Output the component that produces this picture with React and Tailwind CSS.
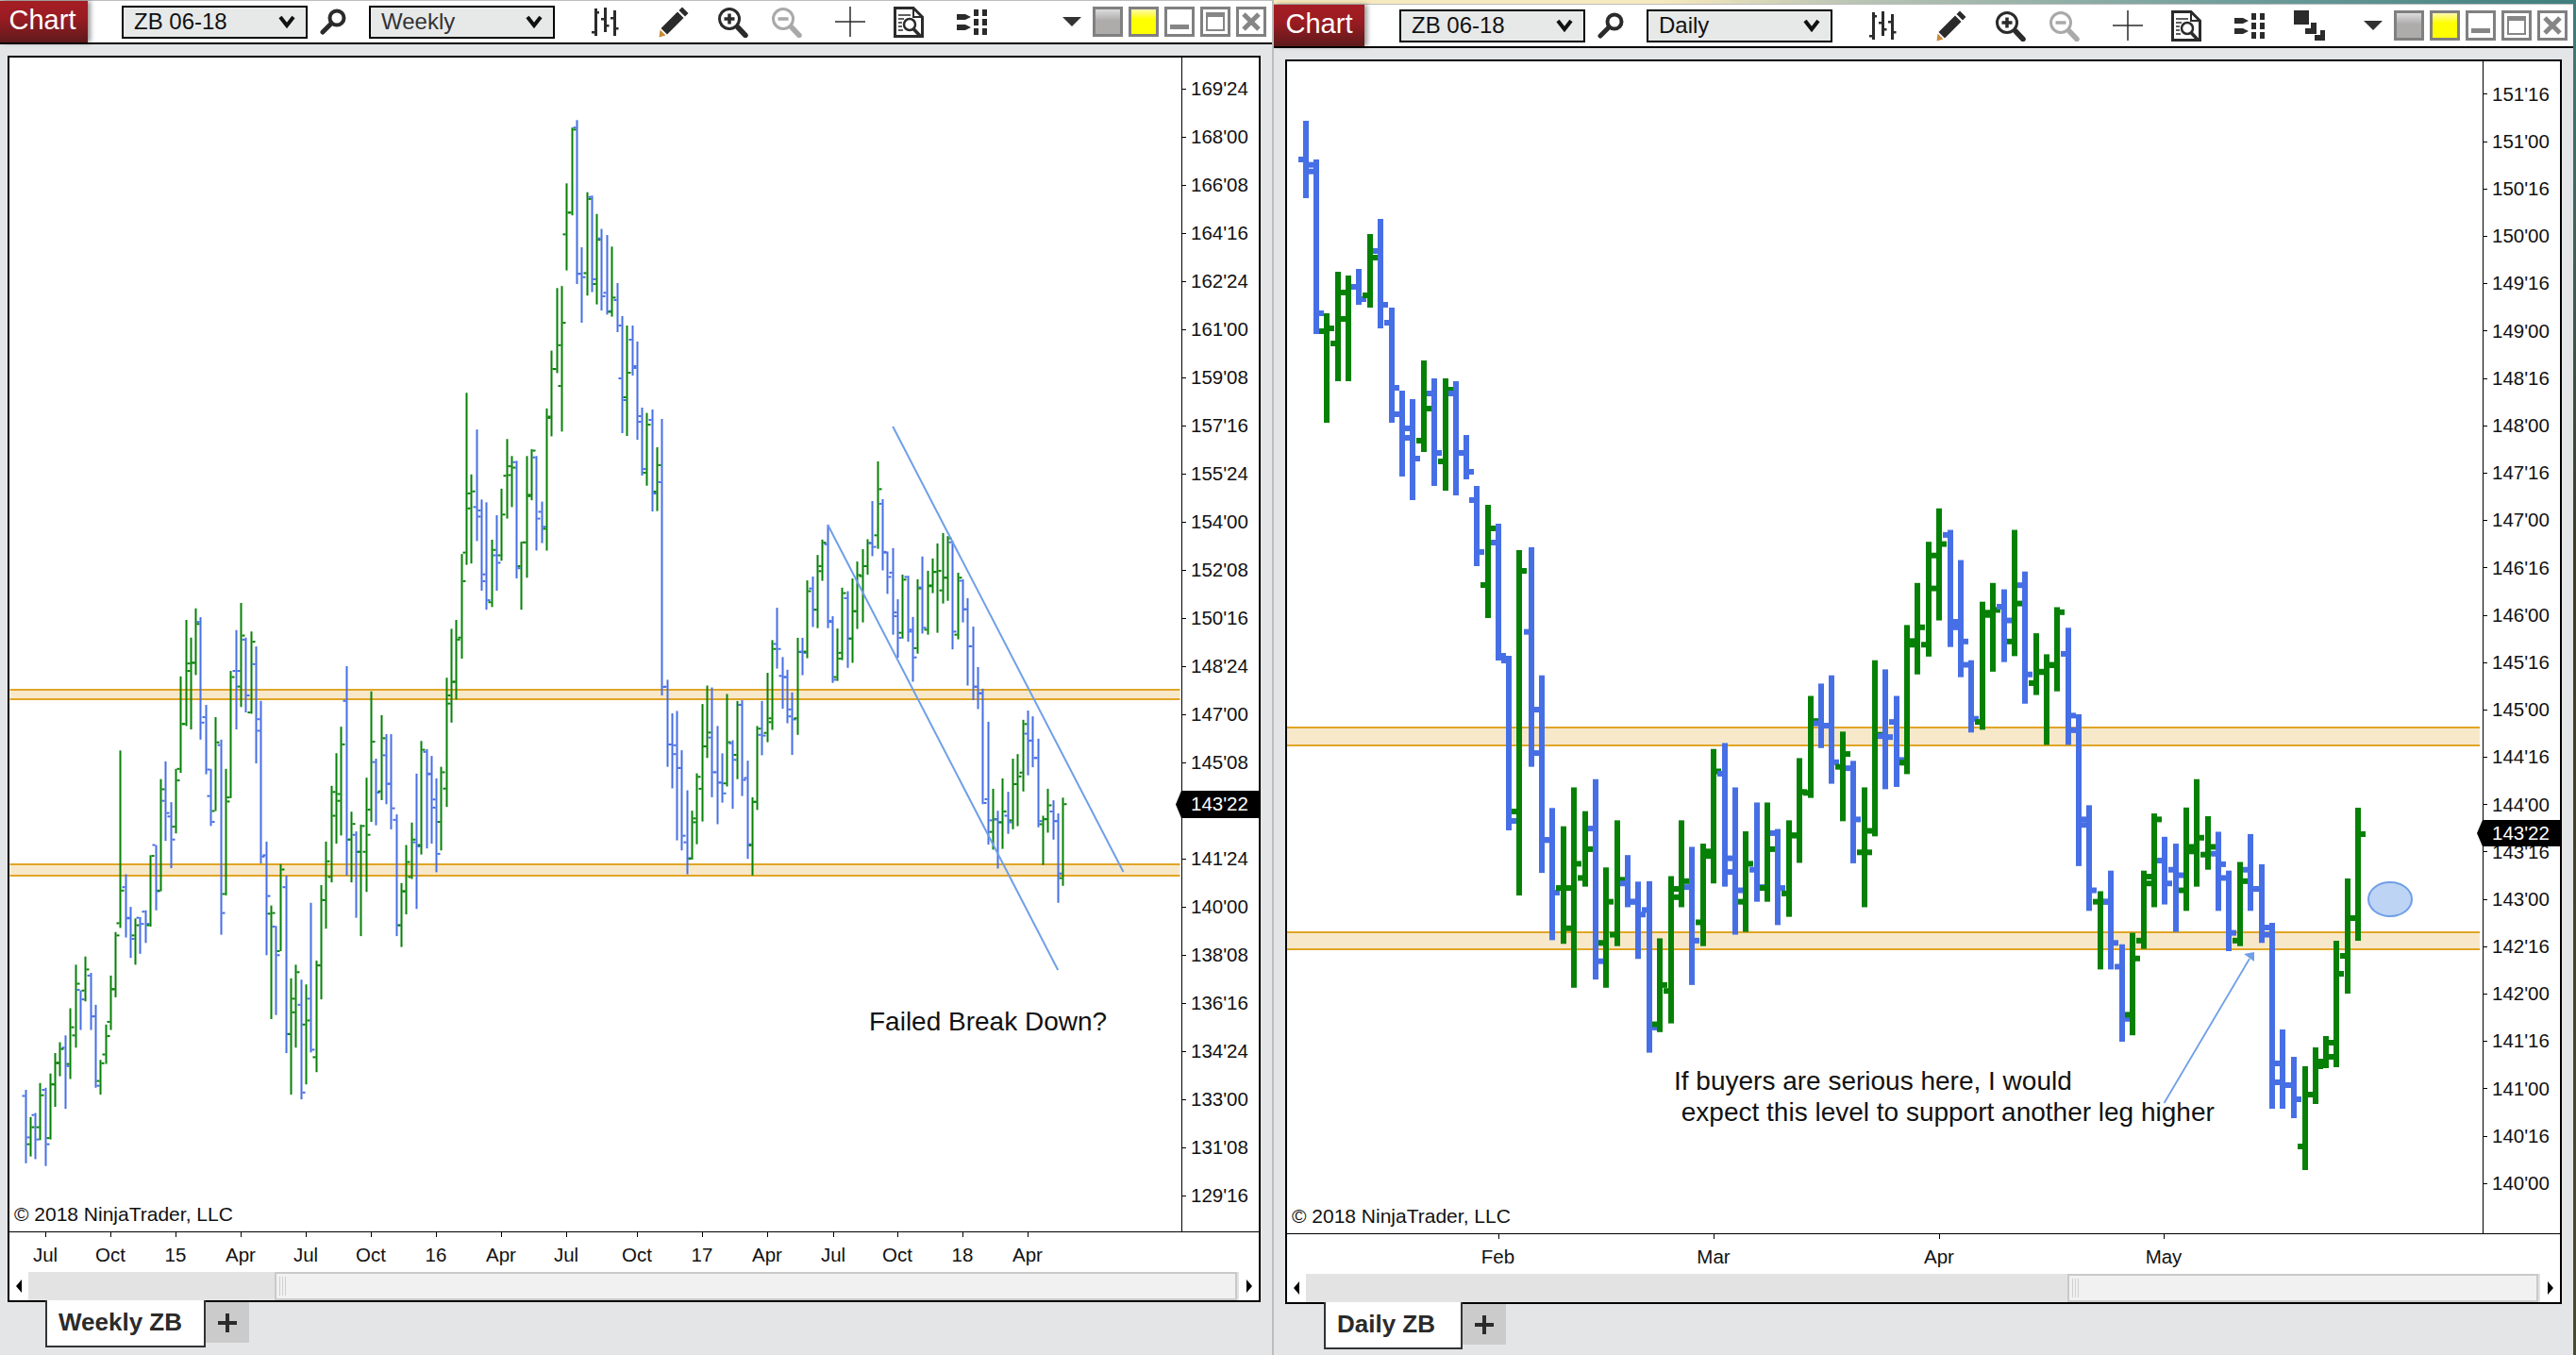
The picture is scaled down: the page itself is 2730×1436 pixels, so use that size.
import React from "react";

// bars are [colour, x, high, low, open, close], traced off crops of the chart
const WEEK_A = [
  ["b",41,1450,1558,1459,1520],["g",53,1490,1548,1530,1505],["b",66,1484,1552,1487,1523],["g",78,1440,1524,1505,1458],
  ["b",93,1447,1562,1450,1530],["g",105,1426,1523,1521,1442],["g",117,1396,1475,1442,1411],["g",131,1380,1430,1410,1390],
  ["b",144,1370,1478,1388,1415],["g",156,1330,1434,1412,1358],["g",171,1266,1388,1370,1294],["b",183,1304,1362,1303,1317],
  ["g",196,1254,1320,1304,1273],["b",210,1278,1362,1282,1342],["b",222,1325,1447,1342,1444],["g",236,1406,1457,1437,1411],
  ["g",249,1354,1412,1398,1371],["g",262,1282,1362,1350,1302],["g",274,1218,1314,1302,1223],["g",286,951,1212,1205,1157],
  ["b",301,1133,1226,1152,1198],["b",313,1181,1256,1197,1228],["g",325,1198,1266,1223,1208],["b",339,1196,1250,1197,1206],
  ["b",352,1186,1234,1188,1206],["g",365,1105,1210,1208,1106],["b",379,1090,1186,1090,1158],["g",391,993,1158,1157,1008],
  ["b",404,967,1084,1025,1043],["b",418,1027,1124,1048,1082],["g",431,978,1073,1063,978],["g",443,842,984,995,912],
  ["g",458,759,915,912,823],["g",470,785,920,834,822],["g",482,742,840,822,765],["b",494,755,935,762,910],
  ["b",509,884,986,902,979],["b",521,978,1062,1018,1056],["g",534,902,1040,1040,939],["b",548,935,1222,943,1190],
  ["g",561,978,1164,1162,1026],["g",573,834,1021,1020,843],["b",587,774,920,834,834],["g",600,734,887,857,782],
  ["b",613,785,895,788,870],["g",627,776,897,895,791],["b",639,798,970,824,922],["b",651,878,1117,905,1107],
  ["b",666,1085,1252,1105,1165],["g",678,1179,1346,1191,1190],["b",690,1209,1340,1210,1252],["g",703,1118,1246,1246,1126],
  ["b",717,1135,1396,1152,1368],["g",730,1286,1457,1368,1316],["g",742,1266,1388,1336,1277],["b",757,1288,1464,1325,1454],
  ["g",769,1295,1442,1354,1348],["b",781,1175,1395,1316,1391],["g",796,1260,1424,1402,1267],["g",808,1149,1317,1267,1171],
  ["g",820,1085,1213,1171,1114],["g",835,1003,1145,1137,1012],["g",847,955,1088,1047,1015],["g",859,916,1076,1025,942],
  ["b",874,827,1135,878,1082],["g",886,1041,1145,1082,1059],["b",899,1070,1197,1075,1100],["g",911,1060,1224,1100,1062],
  ["g",926,991,1159,1100,1075],["g",938,864,1056,1038,938],["b",950,963,1061,968,1013],["g",965,899,1024,1011,933],
  ["b",977,927,1030,958,1000],["b",989,927,1067,1000,1036],["b",1004,1045,1224,1053,1208],["g",1016,1146,1240,1208,1158],
  ["g",1029,1090,1192,1158,1115],["g",1043,1057,1140,1137,1082],["b",1055,985,1184,1086,1092],["g",1068,937,1104,1090,950],
  ["b",1082,949,1095,953,986],["b",1095,959,1088,985,1035],["b",1107,992,1130,1023,1103],["g",1119,975,1098,1056,983],
  ["g",1134,844,1034,1007,870],["g",1146,772,910,882,850],["g",1158,759,876,850,788],["g",1173,662,816,785,702],
  ["g",1185,425,678,660,573],["g",1197,545,676,595,570],["b",1212,479,643,593,607],["b",1224,582,716,598,702],
  ["b",1237,586,744,692,730],["g",1251,641,740,733,656],["b",1263,605,716,664,675],["g",1276,566,672,664,604],
  ["g",1290,493,610,547,533],["g",1303,518,593,546,535],["b",1315,525,698,527,683],["g",1327,644,744,680,645],
  ["g",1342,518,697,645,575],["g",1355,508,583,577,510],["b",1367,518,657,520,610],["b",1381,585,646,600,622],
  ["g",1393,448,657,625,462],["g",1407,363,489,460,390],["g",1420,271,396,390,355],["g",1433,268,482,415,322],
  ["g",1445,117,245,192,160],["g",1460,35,164,160,38],["b",1472,24,265,35,250],["b",1484,211,322,250,255],
  ["g",1499,130,282,249,140],["b",1511,135,277,137,258],["g",1524,162,295,265,200],["b",1536,184,304,198,283],
  ["b",1550,193,310,278,305],["g",1564,210,313,306,285],
];

const WEEK_MID = [
  ["b",654,300,352,318,345],["b",659,335,459,401,424],["g",664,345,462,421,395],["b",669.6,345,398,360,390],
  ["b",675,362,466,388,447],["b",680,432,504,441,497],["g",685,437.6,514.7,501,450],["b",691,434,542,445,523],
  ["g",696,474,541.6,521,493],["b",701,444,737,511,728],
];

const WEEK_B = [
  ["b",201,785,1011,803,953],["b",216,872,1067,953,978],["b",231,866,1202,955,1014],["b",246,968,1228,1014,1190],
  ["b",264,1072,1290,1207,1248],["g",279,1125,1252,1250,1145],["g",294,1028,1212,1155,1037],["g",312,848,1153,1068,958],
  ["g",327,800,988,958,922],["b",342,805,1090,935,1025],["b",360,905,1160,1025,1052],["b",375,976,1104,1052,1080],
  ["g",390,822,1062,1054,947],["b",408,942,1120,950,993],["g",423,840,1043,980,850],["b",438,838,1087,850,1045],
  ["b",456,995,1250,1040,1212],["g",471,1090,1293,1215,1102],["g",486,905,1123,1102,912],["b",501,840,981,928,930],
  ["g",519,767,947,923,885],["g",534,682,915,895,705],["b",549,598,756,692,705],["b",567,726,860,775,778],
  ["b",582,759,898,778,880],["b",597,818,980,862,888],["g",615,676,928,885,713],["b",630,676,773,712,715],
  ["g",645,527,729,712,555],["b",663,517,648,548,603],["g",678,461,651,603,503],["g",693,421,528,490,429],
  ["b",711,383,651,433,635],["b",726,620,793,632,785],["g",741,652,788,778,715],["g",756,546,734,730,560],
  ["b",774,555,754,573,678],["g",789,522,741,678,607],["g",804,478,653,607,513],["g",822,446,636,516,490],
  ["g",837,420,512,490,430],["b",852,321,464,430,440],["g",870,218,445,410,290],["b",885,316,501,328,453],
  ["b",900,452,562,455,518],["b",918,443,668,507,620],["b",933,576,728,610,676],["g",948,512,678,663,525],
  ["b",966,515,686,518,655],["b",981,622,790,660,727],["g",996,524,717,703,548],["b",1011,465,665,545,650],
  ["g",1029,502,668,655,540],["g",1044,470,560,542,505],["g",1059,431,663,505,502],["g",1077,404,587,553,520],
  ["g",1092,412,580,520,418],["b",1107,425,706,428,660],["g",1125,507,680,668,520],["b",1140,524,636,528,602],
  ["b",1155,573,800,602,698],["b",1173,647,838,698,803],["b",1188,752,861,803,820],["b",1203,808,1108,820,1105],
  ["b",1221,894,1213,1095,1150],["g",1236,1068,1226,1180,1147],["b",1251,1125,1275,1148,1155],["g",1266,1041,1224,1155,1127],
  ["b",1284,1076,1185,1138,1155],["g",1299,990,1173,1150,1056],["g",1314,978,1165,1056,1036],["g",1332,889,1075,1026,900],
  ["b",1347,865,1033,925,943],["b",1362,880,1012,943,988],["b",1380,938,1168,988,1152],["g",1395,1138,1266,1160,1147],
  ["g",1410,1068,1182,1147,1111],["b",1428,1098,1200,1127,1152],["b",1443,1132,1364,1152,1288],["g",1458,1091,1320,1300,1108],
];

const DAY_A = [
  ["b",72,84,330,207,224],["b",105,207,762,245,696],["g",138,696,1044,753,744],["g",174,564,912,792,630],
  ["g",207,576,912,714,612],["b",240,555,669,612,651],["g",276,444,678,639,519],["b",309,396,744,498,669],
  ["b",345,678,1044,726,933],
];

const DAY_MID = [
  ["b",1486,414,505,439,454],["b",1497,423,530,464,486],["g",1509,382,479,467,433],["b",1520,401,515,417,480],
  ["g",1532,401,520,489,413],["b",1543,404,525,417,480],["b",1554,461,508,480,500],["b",1565,515,600,530,585],
  ["g",1577,535,655,620,560],["b",1588,555,700,575,695],["b",1599,695,880,700,870],["g",1610,583,949,860,605],
];

const DAY_B = [
  ["b",5,165,645,350,520],["b",27,445,877,615,805],["b",49,735,1024,805,920],["g",72,775,1032,910,910],
  ["g",94,690,1128,998,857],["g",117,742,907,888,825],["b",139,672,1110,780,1070],["g",161,865,1128,1030,940],
  ["g",184,762,1037,1012,892],["b",206,838,952,900,940],["b",228,896,1065,940,968],["b",251,895,1270,958,1215],
  ["g",273,1020,1225,1208,1122],["g",296,884,1206,1135,930],["g",318,762,952,912,895],["b",339,820,1122,908,1025],
  ["g",362,813,1037,985,830],["g",384,606,900,840,655],["b",408,593,907,660,845],["b",429,690,1012,875,915],
  ["g",451,786,1006,940,857],["b",474,723,940,870,908],["g",496,723,940,910,825],["b",518,781,991,790,910],
  ["g",541,762,973,922,795],["g",563,626,855,795,700],["g",586,490,713,702,545],["b",608,463,604,550,555],
  ["b",629,445,682,555,635],["g",653,568,764,645,617],["b",675,632,856,648,760],["g",698,690,952,832,832],
  ["g",719,412,797,785,575],["b",741,432,694,578,580],["b",765,490,689,547,630],["g",786,335,661,636,370],
  ["g",808,243,443,378,340],["g",831,153,404,378,183],["g",853,80,325,255,158],["b",876,127,383,138,328],
  ["b",898,193,449,340,371],["b",919,412,570,422,540],["g",943,284,564,547,308],["g",964,243,437,313,302],
  ["b",988,257,416,295,325],["g",1010,127,403,371,288],["b",1031,218,507,248,443],["g",1054,353,488,462,437],
  ["g",1076,399,597,438,422],["g",1098,296,480,423,307],["b",1121,341,597,398,533],["b",1143,530,862,565,772],
  ["b",1165,729,960,760,915],["g",1188,917,1088,940,940],["b",1209,872,1088,940,1030],["b",1233,1033,1246,1082,1196],
  ["g",1254,1008,1232,1187,1064],["g",1277,872,1043,1025,885],["g",1299,747,952,900,760],["b",1321,798,946,850,900],
  ["b",1344,813,1006,870,882],["g",1366,734,960,915,820],["g",1388,672,907,830,800],["g",1411,753,870,837,820],
  ["b",1433,787,960,835,858],["b",1455,872,1048,888,1008],["g",1478,853,1037,1025,895],["b",1500,792,960,870,912],
  ["b",1522,858,1030,912,1012],
];

const DAY_END = [
  ["b",2408,978,1175,983,1147],["b",2419,1091,1175,1127,1150],["b",2431,1120,1185,1150,1165],["g",2443,1130,1240,1215,1160],
  ["g",2454,1110,1170,1160,1130],["g",2465,1098,1132,1125,1105],["g",2476,997,1131,1120,1032],["g",2488,931,1053,1013,973],
  ["g",2499,856,997,973,884],
];

const trace = (rows, ox, oy, sx, sy) =>
  rows.map(([k, x, h, l, o, c]) => [k, ox + x / sx, oy + h / sy, oy + l / sy, oy + o / sy, oy + c / sy]);

const WEEK_BARS = [...trace(WEEK_A, 10, 110, 2.45, 1.3876), ...WEEK_MID, ...trace(WEEK_B, 640, 400, 3, 2.45)];
const DAY_BARS = [...trace(DAY_A, 1360, 100, 3, 3), ...DAY_MID, ...trace(DAY_B, 1620, 500, 1.96, 2.063), ...DAY_END];

// the 143'16 row of the weekly axis sits under the last-price marker, so it has no label
const WEEK_PRICES = ["169'24","168'00","166'08","164'16","162'24","161'00","159'08","157'16","155'24","154'00","152'08","150'16","148'24","147'00","145'08","","141'24","140'00","138'08","136'16","134'24","133'00","131'08","129'16"];
const DAY_PRICES = ["151'16","151'00","150'16","150'00","149'16","149'00","148'16","148'00","147'16","147'00","146'16","146'00","145'16","145'00","144'16","144'00","143'16","143'00","142'16","142'00","141'16","141'00","140'16","140'00"];

const WEEK_TIMES = [["Jul",48],["Oct",117],["15",186],["Apr",255],["Jul",324],["Oct",393],["16",462],["Apr",531],["Jul",600],["Oct",675],["17",744],["Apr",813],["Jul",883],["Oct",951],["18",1020],["Apr",1089]];
const DAY_TIMES = [["Feb",1587.5],["Mar",1816],["Apr",2055],["May",2293]];

const INK = "#2b2b2b";

function Bars({ data, stem, tick, thick }) {
  return data.map(([k, x, h, l, o, c], i) => {
    const fill = k === "g" ? "#068106" : "#476fe5";
    const sx = Math.round(x - stem / 2);
    return (
      <g key={i} fill={fill}>
        <rect x={sx} y={h} width={stem} height={l - h} />
        <rect x={sx - tick} y={o - thick / 2} width={tick} height={thick} />
        <rect x={sx + stem} y={c - thick / 2} width={tick} height={thick} />
      </g>
    );
  });
}

function Band({ x, w, top, bottom }) {
  return (
    <g>
      <rect x={x} y={top} width={w} height={bottom - top} fill="#f8e8ca" />
      <rect x={x} y={top} width={w} height="2" fill="#e0a526" />
      <rect x={x} y={bottom - 2} width={w} height="2" fill="#e0a526" />
    </g>
  );
}

const SearchIcon = () => (
  <svg width="28" height="28" viewBox="0 0 28 28" fill="none" stroke={INK}>
    <circle cx="18" cy="10" r="7.5" strokeWidth="4" />
    <path d="M12 16 3 25" strokeWidth="5" strokeLinecap="round" />
  </svg>
);

const Chevron = () => (
  <svg width="18" height="14" viewBox="0 0 18 14" fill="none" stroke="#111" strokeWidth="4">
    <path d="M2 2 9 11 16 2" />
  </svg>
);

const BarsIcon = () => (
  <svg width="30" height="30" viewBox="0 0 30 30" fill={INK}>
    <rect x="4" y="1" width="3" height="29" />
    <rect x="7" y="4" width="2" height="2.5" />
    <rect x="1" y="25" width="3" height="2.5" />
    <rect x="14" y="0" width="3" height="26" />
    <rect x="11" y="11" width="3" height="2.5" />
    <rect x="17" y="18" width="2.5" height="2.5" />
    <rect x="24" y="3" width="3" height="27" />
    <rect x="21" y="10" width="3" height="2.5" />
    <rect x="27" y="21" width="2.5" height="2.5" />
  </svg>
);

const PencilIcon = () => (
  <svg width="33" height="34" viewBox="0 0 33 34">
    <path d="M25 1.5 31.5 8 28 11.500 21.500 5Z" fill={INK} />
    <path d="M20 6.500 26.500 13 9 30.500 2.500 24Z" fill={INK} />
    <path d="M1.500 25.500 7.500 31.500 0.500 33.500Z" fill="#c98a3a" />
  </svg>
);

const ZoomIcon = ({ color, plus }) => (
  <svg width="33" height="33" viewBox="0 0 33 33" fill="none" stroke={color}>
    <circle cx="13" cy="13" r="10.500" strokeWidth="3" />
    <path d="M7.500 13H18.500" strokeWidth="3.500" />
    {plus && <path d="M13 7.500V18.500" strokeWidth="3.500" />}
    <path d="M22 22 30 30.500" strokeWidth="5.500" strokeLinecap="round" />
  </svg>
);

const CrossIcon = () => (
  <svg width="32" height="32" viewBox="0 0 32 32" stroke={INK} strokeWidth="1.500">
    <path d="M0 16H32M16 0V32" />
  </svg>
);

const DocIcon = () => (
  <svg width="33" height="33" viewBox="0 0 33 33" fill="none" stroke={INK}>
    <path d="M1.500 1.500H21L30.500 11V31.500H1.500Z" strokeWidth="3" />
    <path d="M21 1.500V11H30.500" strokeWidth="2" />
    <path d="M5 9H18M5 13H11M5 17H9M5 21H9M5 25H10" strokeWidth="1.600" />
    <circle cx="17" cy="19" r="6" strokeWidth="2.500" fill="#fff" />
    <path d="M21 23.500 29 32" strokeWidth="3.500" />
  </svg>
);

const GridIcon = () => (
  <svg width="33" height="27" viewBox="0 0 33 27" fill={INK}>
    <path d="M0 5H9L15 8 9 11H0ZM0 16H9L15 19 9 22H0Z" />
    <rect x="18" y="0" width="5" height="7" /><rect x="27" y="0" width="5" height="7" />
    <rect x="18" y="10" width="5" height="7" /><rect x="27" y="10" width="5" height="7" />
    <rect x="18" y="20" width="5" height="7" /><rect x="27" y="20" width="5" height="7" />
  </svg>
);

const StackIcon = () => (
  <svg width="33" height="33" viewBox="0 0 33 33" fill={INK}>
    <rect x="0" y="0" width="16" height="15" />
    <path d="M18 13H24V25H12V19H18Z" />
    <path d="M28 21H33V32H22V26H28Z" />
  </svg>
);

function Select({ label, dark }) {
  return (
    <div className={`w-[197px] h-[35px] border-2 border-black bg-[#e7e9e9] flex items-center justify-between pl-[11px] pr-[11px] text-[24px] ${dark ? "text-[#333]" : "text-[#111]"}`}>
      <span>{label}</span>
      <Chevron />
    </div>
  );
}

function WinButtons() {
  return (
    <div className="flex items-center gap-[6px]">
      <div className="w-[32px] h-[32px] border-[3px] border-[#808080] bg-[linear-gradient(180deg,#dcdcdc,#aeabab_45%)]" />
      <div className="w-[32px] h-[32px] border-[3px] border-[#808080] bg-[linear-gradient(180deg,#fff9b0,#ffff00_40%)]" />
      <div className="w-[32px] h-[32px] border-[3px] border-[#808080] bg-white flex items-end justify-center pb-[5px]">
        <div className="w-[20px] h-[5px] bg-[#868686]" />
      </div>
      <div className="w-[32px] h-[32px] border-[3px] border-[#808080] bg-white flex items-center justify-center">
        <div className="w-[20px] h-[20px] border-2 border-t-[5px] border-[#868686]" />
      </div>
      <div className="w-[32px] h-[32px] border-[3px] border-[#808080] bg-white flex items-center justify-center">
        <svg width="20" height="20" viewBox="0 0 20 20" stroke="#868686" strokeWidth="5"><path d="M2 2 18 18M18 2 2 18" /></svg>
      </div>
    </div>
  );
}

function Toolbar({ interval, dark, chartClass, extra }) {
  return (
    <div className="h-[46px] bg-white border-b-2 border-black flex items-center pr-[6px]">
      <div className={`${chartClass} self-stretch flex items-center justify-center pb-[2px] text-white text-[29px] bg-[linear-gradient(180deg,#a51d24,#9a1c22_40%,#5f1a1c)] shadow-[3px_0_5px_rgba(0,0,0,0.4)]`}>
        Chart
      </div>
      <Select label="ZB 06-18" />
      <div className="ml-[13px]"><SearchIcon /></div>
      <div className="ml-[24px]"><Select label={interval} dark={dark} /></div>
      <div className="ml-[38px]"><BarsIcon /></div>
      <div className="ml-[42px]"><PencilIcon /></div>
      <div className="ml-[29px]"><ZoomIcon color={INK} plus /></div>
      <div className="ml-[24px]"><ZoomIcon color="#a9a9a9" /></div>
      <div className="ml-[35px]"><CrossIcon /></div>
      <div className="ml-[30px]"><DocIcon /></div>
      <div className="ml-[34px]"><GridIcon /></div>
      {extra && <div className="ml-[30px]"><StackIcon /></div>}
      <div className="ml-auto mr-[12px] w-0 h-0 border-x-[10px] border-x-transparent border-t-[10px] border-t-[#333]" />
      <WinButtons />
    </div>
  );
}

function PriceAxis({ prices, rowClass, padClass, markerClass }) {
  return (
    <div className={`relative w-[82px] border-l border-black text-[20.5px] text-[#111] ${padClass}`}>
      {prices.map((p, i) => (
        <div key={i} className={`${rowClass} flex items-center`}>
          <div className="w-[4px] h-px bg-black" />
          {p && <span className="ml-[5px] leading-none">{p}</span>}
        </div>
      ))}
      <div className={`absolute ${markerClass} -left-[7px] w-[89px] bg-black text-white flex items-center pl-[16px] [clip-path:polygon(0_50%,6px_0,100%_0,100%_100%,6px_100%)]`}>
        143'22
      </div>
    </div>
  );
}

function TimeAxis({ times, origin, heightClass }) {
  return (
    <div className={`relative ${heightClass} border-t border-black text-[20.5px] text-[#111] shrink-0`}>
      {times.map(([t, x]) => (
        <React.Fragment key={x}>
          <div className="absolute top-0 w-px h-[5px] bg-black" style={{ left: x - origin }} />
          <span className="absolute top-[12px] leading-[24px] -translate-x-1/2" style={{ left: x - origin }}>{t}</span>
        </React.Fragment>
      ))}
    </div>
  );
}

function ScrollBar({ trackClass, thumbClass }) {
  return (
    <div className="h-[30px] shrink-0 bg-[#e3e3e3] flex">
      <div className={`${trackClass} flex items-stretch`}>
        <div className="w-[20px] bg-white flex items-center justify-center">
          <div className="w-0 h-0 border-y-[7px] border-y-transparent border-r-[6px] border-r-black" />
        </div>
      </div>
      <div className={`${thumbClass} bg-[#f1f1f1] border-2 border-[#c9c9c9] flex items-center pl-[3px] gap-[2px]`}>
        <div className="w-px h-[20px] bg-[#d0d0d0]" />
        <div className="w-px h-[20px] bg-[#d0d0d0]" />
        <div className="w-px h-[20px] bg-[#d0d0d0]" />
      </div>
      <div className="flex-1 bg-white border-l-2 border-[#e3e3e3] flex items-center justify-center">
        <div className="w-0 h-0 border-y-[7px] border-y-transparent border-l-[6px] border-l-black" />
      </div>
    </div>
  );
}

function Tabs({ label, rowClass, tabClass }) {
  return (
    <div className={`${rowClass} flex items-start`}>
      <div className={`${tabClass} relative z-10 -mt-[2px] h-[50px] bg-white border-x-2 border-b-2 border-[#333] flex items-center pl-[12px] pb-[2px] text-[26px] font-bold text-[#2b2b2b]`}>
        {label}
      </div>
      <div className="w-[46px] h-[43px] bg-[#cbcbcb] flex items-center justify-center">
        <svg width="20" height="20" viewBox="0 0 20 20" stroke="#2b2b2b" strokeWidth="4"><path d="M0 10H20M10 0V20" /></svg>
      </div>
    </div>
  );
}

function WeeklyWindow() {
  return (
    <div className="w-[1348px] shrink-0">
      <div className="h-px bg-[#bdbdbd]" />
      <Toolbar interval="Weekly" dark chartClass="w-[93px] mr-[36px] pr-[3px]" />
      <div className="pt-[12px] pl-[8px]">
        <div className="w-[1328px] h-[1321px] border-2 border-black bg-white flex flex-col">
          <div className="flex-1 flex min-h-0">
            <div className="relative flex-1">
              <svg className="absolute inset-0 w-full h-full" viewBox="10 61 1241 1244">
                <Band x={10} w={1240} top={730} bottom={742} />
                <Band x={10} w={1240} top={915} bottom={929} />
                <Bars data={WEEK_BARS} stem={2} tick={3} thick={2} />
                <g stroke="#6f9fe8" strokeWidth="2" fill="none">
                  <path d="M945.700 452 1190 924" />
                  <path d="M876.700 556 1120.700 1028" />
                </g>
              </svg>
              <span className="absolute left-[5px] bottom-[6px] text-[21px] leading-[24px] text-[#111]">© 2018 NinjaTrader, LLC</span>
              <span className="absolute left-[911px] top-[1006px] text-[28px] leading-[32px] text-[#111]">Failed Break Down?</span>
            </div>
            <PriceAxis prices={WEEK_PRICES} rowClass="h-[51px]" padClass="pt-[7.5px]" markerClass="top-[777px] h-[29px]" />
          </div>
          <TimeAxis times={WEEK_TIMES} origin={10} heightClass="h-[43px]" />
          <ScrollBar trackClass="w-[281px]" thumbClass="w-[1020px]" />
        </div>
      </div>
      <Tabs label="Weekly ZB" rowClass="ml-[48px]" tabClass="w-[170px]" />
    </div>
  );
}

function DailyWindow() {
  return (
    <div className="w-[1377px] shrink-0">
      <div className="h-[4px] bg-[linear-gradient(90deg,#f6e9bd_0,#f6e9bd_30%,#b9c4b4_45%,#6d9c9a_75%,#3f7f7d)]" />
      <div className="h-px bg-[#bdbdbd]" />
      <Toolbar interval="Daily" chartClass="w-[96px] mr-[37px]" extra />
      <div className="pt-[12px] pl-[12px]">
        <div className="w-[1353px] h-[1319px] border-2 border-black bg-white flex flex-col">
          <div className="flex-1 flex min-h-0">
            <div className="relative flex-1">
              <svg className="absolute inset-0 w-full h-full" viewBox="1364 65 1267 1242">
                <Band x={1364} w={1264} top={770} bottom={791} />
                <Band x={1364} w={1264} top={987} bottom={1007} />
                <Bars data={DAY_BARS} stem={6} tick={5} thick={6} />
                <ellipse cx="2533" cy="953" rx="23" ry="18" fill="#bdd4f5" stroke="#6f9fe8" strokeWidth="2" />
                <path d="M2293.500 1169 2384 1016" stroke="#6f9fe8" strokeWidth="1.800" fill="none" />
                <path d="M2389 1009 2378 1011 2389 1019Z" fill="#6f9fe8" />
              </svg>
              <span className="absolute left-[5px] bottom-[6px] text-[21px] leading-[24px] text-[#111]">© 2018 NinjaTrader, LLC</span>
              <div className="absolute left-[410px] top-[1064px] text-[28px] leading-[33px] text-[#111] whitespace-pre">
                <div>If buyers are serious here, I would</div>
                <div> expect this level to support another leg higher</div>
              </div>
            </div>
            <PriceAxis prices={DAY_PRICES} rowClass="h-[50.2px]" padClass="pt-[9.9px]" markerClass="top-[804px] h-[28px]" />
          </div>
          <TimeAxis times={DAY_TIMES} origin={1364} heightClass="h-[43px]" />
          <ScrollBar trackClass="w-[827px]" thumbClass="w-[499px]" />
        </div>
      </div>
      <Tabs label="Daily ZB" rowClass="ml-[53px]" tabClass="w-[147px]" />
    </div>
  );
}

export default function App() {
  return (
    <div className="w-[2730px] h-[1436px] overflow-hidden bg-[#e4e5e7] flex font-['Liberation_Sans',Arial,sans-serif]">
      <WeeklyWindow />
      <div className="w-[2px] shrink-0 bg-[#bdbdbd]" />
      <DailyWindow />
      <div className="w-[3px] shrink-0 bg-[linear-gradient(180deg,#3f7f7d,#3c3a2a_40%,#4a4a30)]" />
    </div>
  );
}
